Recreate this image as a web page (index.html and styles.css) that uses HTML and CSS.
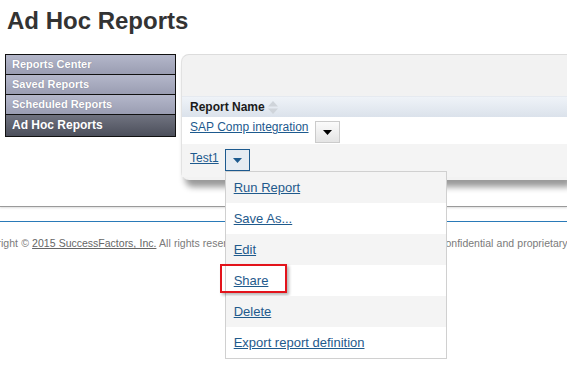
FILE: index.html
```html
<!DOCTYPE html>
<html>
<head>
    <title>Ad Hoc Reports</title>
    <meta charset="UTF-8">
    <meta name="viewport" content="width=device-width, initial-scale=1.0">
    <link rel="stylesheet" href="styles.css">
</head>
<body>
    <h1 class="page-title">Ad Hoc Reports</h1>

    <div class="main">
        <ul class="side-nav">
            <li class="nav-item">Reports Center</li>
            <li class="nav-item">Saved Reports</li>
            <li class="nav-item">Scheduled Reports</li>
            <li class="nav-item active">Ad Hoc Reports</li>
        </ul>

        <div class="panel">
            <div class="panel-top"></div>
            <div class="list-header">
                Report Name
                <svg class="sort-icon" width="12" height="15" viewBox="0 0 12 15">
                    <polygon points="6,1 11,6.5 1,6.5" fill="#cfd4da"/>
                    <polygon points="1,8.5 11,8.5 6,14" fill="#cfd4da"/>
                </svg>
            </div>
            <div class="list-row">
                <a href="#" class="report-link">SAP Comp integration</a>
                <span class="drop-btn">
                    <svg width="9" height="5" viewBox="0 0 9 5"><polygon points="0,0 9,0 4.5,5" fill="#000"/></svg>
                </span>
            </div>
            <div class="list-row alt">
                <a href="#" class="report-link">Test1</a>
                <div class="drop-wrap">
                    <span class="drop-btn open">
                        <svg width="9" height="5" viewBox="0 0 9 5"><polygon points="0,0 9,0 4.5,5" fill="#1d5a8e"/></svg>
                    </span>
                    <ul class="menu">
                        <li class="menu-item"><a href="#">Run Report</a></li>
                        <li class="menu-item"><a href="#">Save As...</a></li>
                        <li class="menu-item"><a href="#">Edit</a></li>
                        <li class="menu-item highlight"><a href="#">Share</a><span class="mark"></span></li>
                        <li class="menu-item"><a href="#">Delete</a></li>
                        <li class="menu-item"><a href="#">Export report definition</a></li>
                    </ul>
                </div>
            </div>
        </div>
    </div>

    <div class="footer">
        <div class="rule-gray"></div>
        <div class="rule-blue"></div>
        <p class="copyright">Copyright &copy; <a href="#">2015 SuccessFactors, Inc.</a> All rights reserved. The online services are SuccessFactors confidential and proprietary</p>
    </div>
</body>
</html>
```

FILE: styles.css
```css
html, body {
    height: 100%;
}
body {
    font-family: "Liberation Sans", Arial, sans-serif;
    background-color: #fff;
    color: #222;
    margin: 0;
    min-height: 387px;
}
.page-title {
    margin: 0;
    padding: 8px 0 0 7px;
    font-size: 24px;
    line-height: 26px;
    color: #333;
}
.main {
    display: flex;
    align-items: flex-start;
    padding-top: 20px;
}
.side-nav {
    list-style: none;
    margin: 0 0 0 5px;
    padding: 0;
    width: 169px;
    border: 1px solid #111;
    flex-shrink: 0;
}
.nav-item {
    height: 19px;
    line-height: 19px;
    padding-left: 6px;
    font-size: 11px;
    font-weight: bold;
    color: #fff;
    background: linear-gradient(#b4b7ca, #9a9db2);
    border-bottom: 1px solid #111;
    text-shadow: 0 0 1px rgba(80, 80, 100, 0.5);
}
.nav-item.active {
    height: 21px;
    line-height: 21px;
    font-size: 12px;
    background: linear-gradient(#707380, #4c4f5b);
    border-bottom: none;
}
.panel {
    flex: 1;
    margin-left: 5px;
    background-color: #f2f2f2;
    border-top: 1px solid #dcdcdc;
    border-left: 1px solid #e2e2e2;
    border-radius: 8px 0 0 8px;
    padding-bottom: 3px;
    box-shadow: 4px 7px 6px rgba(0, 0, 0, 0.4);
}
.panel-top {
    height: 41px;
}
.list-header {
    display: flex;
    align-items: center;
    height: 20px;
    padding-left: 8px;
    font-size: 12px;
    font-weight: bold;
    color: #1a1a1a;
    border-top: 1px solid #e6eaf0;
    background: linear-gradient(#eff3f8, #dbe2eb);
}
.sort-icon {
    margin-left: 2px;
}
.list-row {
    display: flex;
    align-items: flex-start;
    height: 27px;
    padding: 2px 0 0 8px;
    box-sizing: border-box;
    background-color: #fff;
}
.list-row.alt {
    height: 33px;
    padding-top: 5px;
    background-color: #f4f4f4;
}
.report-link {
    font-size: 12px;
    line-height: 16px;
    color: #1d5a8e;
    margin-right: 6px;
}
.list-row.alt .report-link {
    margin-top: 1px;
}
.drop-btn {
    display: flex;
    align-items: center;
    justify-content: center;
    width: 23px;
    height: 20px;
    margin-top: 2px;
    border: 1px solid #cbcbcb;
    background: linear-gradient(#fbfbfb, #e4e4e4);
}
.drop-btn.open {
    margin-top: 0;
    border-color: #1d5a8e;
    background: #e6ecf2;
}
.drop-wrap {
    position: relative;
}
.menu {
    position: absolute;
    top: 22px;
    left: 0;
    z-index: 5;
    list-style: none;
    margin: 0;
    padding: 0;
    width: 220px;
    background-color: #fff;
    border: 1px solid #d0d0d0;
}
.menu-item {
    position: relative;
    height: 31px;
    line-height: 31px;
    padding-left: 8px;
    font-size: 13px;
    background-color: #fff;
}
.menu-item:nth-child(odd) {
    background-color: #f4f4f4;
}
.menu-item a {
    color: #1f5a8c;
}
.mark {
    position: absolute;
    top: -1px;
    left: -6px;
    width: 63px;
    height: 25px;
    border: 2px solid #e3131b;
    box-shadow: 2px 2px 3px rgba(0, 0, 0, 0.3);
}
.footer {
    margin-top: 26px;
    overflow: hidden;
}
.rule-gray {
    height: 1px;
    background-color: #9a9a9a;
    box-shadow: 0 1px 2px rgba(0, 0, 0, 0.2);
}
.rule-blue {
    height: 1px;
    margin-top: 14px;
    background-color: #2a7ab8;
}
.copyright {
    margin: 15px 0 0 -27px;
    font-size: 10.5px;
    line-height: 12px;
    color: #7a7a7a;
    white-space: nowrap;
    word-spacing: 0.3px;
}
.copyright a {
    color: #666;
}
```
